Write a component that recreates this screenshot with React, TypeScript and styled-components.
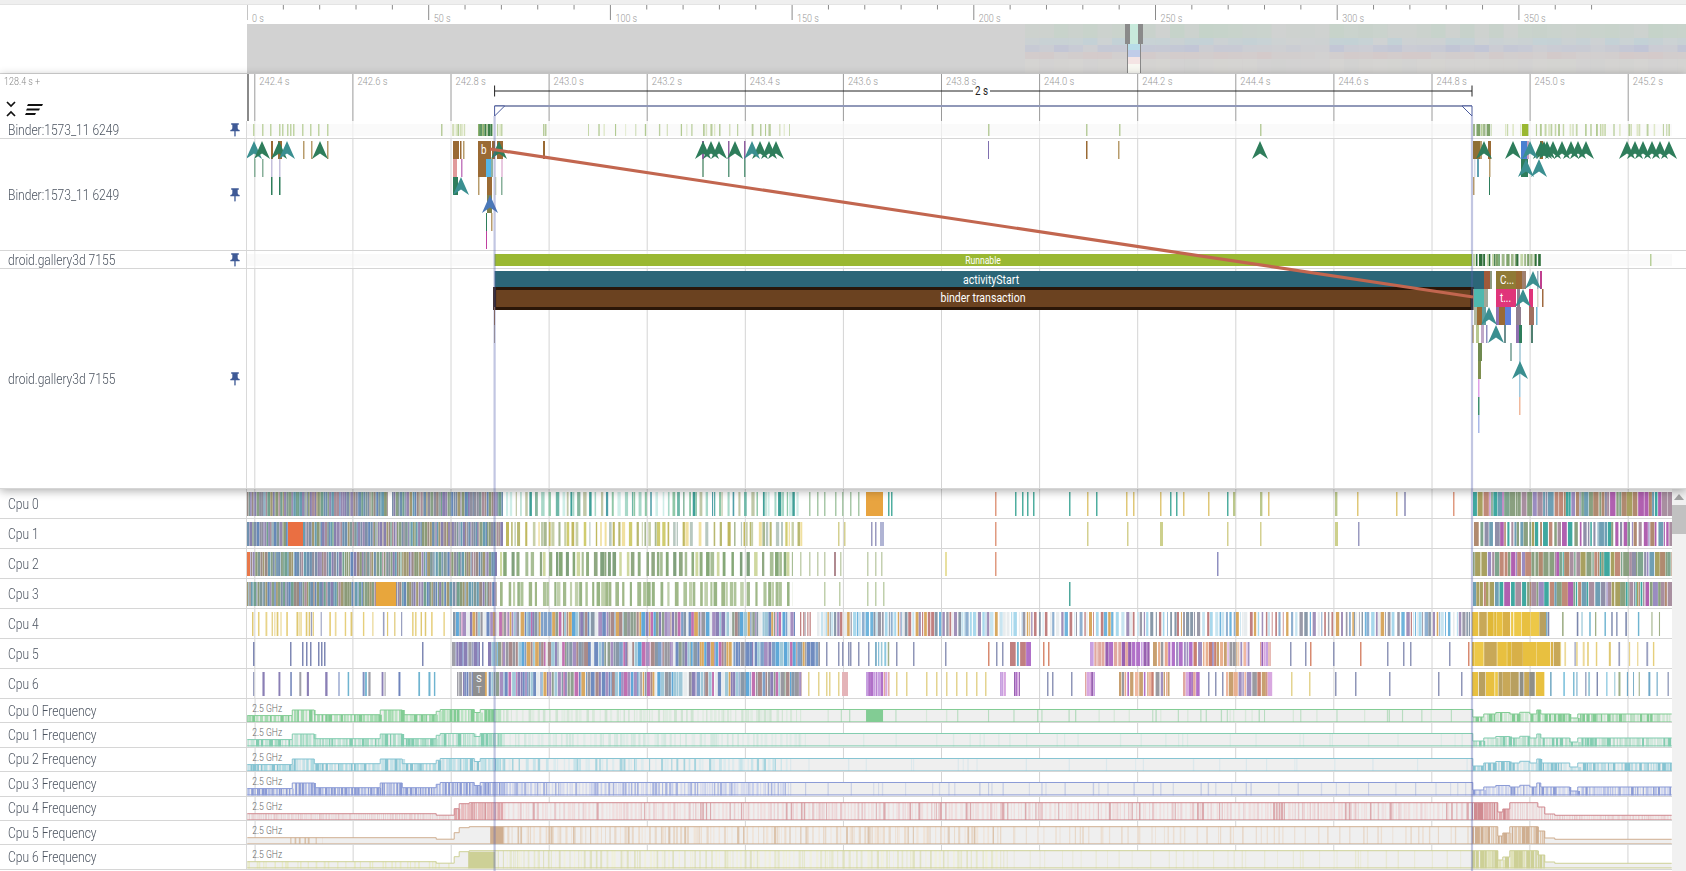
import React from 'react';
import styled, { createGlobalStyle } from 'styled-components';

type Stripe = { x: number; w: number; c: string };
type Slice = [number, number, number, string];
type Mark = [number, number, string];
type Band = [number, number, number, number, number, number, string[]];
type Step = [number, number];

const SIDE = 247;
const FULL_W = 1686 - SIDE;
const SCROLL_W = 1672 - SIDE;
const SEL_A = 494.6;
const SEL_B = 1472;
const GRID = Array.from({ length: 15 }, (_, i) => 254.8 + i * 98.1);
const GRID_TIMES = GRID.map((_, i) => (242.4 + i * 0.2).toFixed(1) + ' s');

const GREEN = '#2e7d5b';
const TEAL = '#3a8f90';
const BLUE = '#4a78b8';

const DENSE = ['#7d8fa8', '#8b9a78', '#6f90ae', '#9488b0', '#72a08e', '#a09872', '#689cb0', '#8880ae', '#88a086', '#8f8f9e', '#9a8a84', '#809898', '#6688b8', '#a88e9a'];
const TEALS = ['#8fc8a8', '#3fa098', '#cfeee8', '#88b8a0', '#c0c8a8', '#6fb8a8', '#a8d8c8', '#4f9fa8'];
const WARM = ['#b8b870', '#d0cc70', '#c8d0a8', '#f0e0a0', '#a8b890', '#c0b860', '#b8c8c0'];
const SAGE = ['#86a878', '#8fa882', '#90ae80', '#a8be96', '#80a07c', '#cfd8a0'];
const SAGE2 = ['#a3bb8e', '#aec49a', '#98b484', '#c0d0ac', '#a0b888'];
const YELLOW = ['#e8d48a', '#ecd999', '#e6cf7c', '#dfc873', '#e8d48a', '#9aa0c0'];
const SKY = ['#6f8bbf', '#8a7fb5', '#5fa8d8', '#a0c8d8', '#a88a8a', '#e8ecee', '#7fa0c8', '#8fa090', '#a58fc0', '#c070b0', '#8898a8', '#9898a0', '#d8a860'];
const SKY_PALE = ['#6fb4dc', '#a8d8ec', '#8fb0d0', '#9a9aa8', '#c08080', '#e8ecee', '#d8a860', '#8898a8', '#c8e4f0', '#a090b8'];
const GOLD = ['#e8c040', '#d8b048', '#b8a060', '#edc848', '#8f8f88', '#e0b838', '#c8a858'];
const RIGHT = ['#a88fa0', '#8aa080', '#6f9fb4', '#b08a70', '#9a8cc0', '#7fa58e', '#c08a78', '#8f8fa8', '#a8a060', '#3fa8a0', '#b060b0'];
const BLUES = ['#6f84bc', '#7f90c0', '#9aa0c0', '#6fb4d0', '#a0a0a8', '#8a7fb5'];
const SKYLINE = ['#6fb4d0', '#8cc8e0', '#7fb0c8', '#6fa8c8', '#9ac8d8', '#7a86ac', '#a0b088'];
const SALMON = ['#e8a890', '#f0b8a0', '#c87f70', '#b070c8', '#c8a070', '#a090c0', '#e8b090', '#d8a8e0', '#9a9aa0'];
const PURPLE = ['#b070c8', '#c8a0e0', '#9860b0', '#d8a8e0', '#e0a8a0'];
const PALE = ['#c4d6a8', '#d2deb8', '#b2ca92', '#dfe8c8', '#bcd0a0'];
const DARKPALE = ['#4f8f4a', '#6fa35a', '#8fb06e', '#3f7f48', '#a8c48a'];

const band = (seed: number, from: number, to: number, wMin: number, wMax: number, gapMax: number, colors: string[]): Stripe[] => {
  let s = seed * 7919 + 13;
  const rnd = () => {
    s = (s * 1664525 + 1013904223) % 4294967296;
    return s / 4294967296;
  };
  const out: Stripe[] = [];
  let x = from;
  while (x < to) {
    const w = wMin + rnd() * (wMax - wMin);
    out.push({ x, w: Math.min(w, to - x), c: colors[Math.floor(rnd() * colors.length)] });
    x += w + rnd() * gapMax;
  }
  return out;
};

const bands = (list: Band[]) => list.flatMap((b) => band(...b));
const singles = (xs: number[], c: string, w = 1.5): Stripe[] => xs.map((x) => ({ x, w, c }));

const cpuRows: { name: string; stripes: Stripe[]; extra?: boolean }[] = [
  {
    name: 'Cpu 0',
    stripes: [
      ...bands([
        [1, 247, 388, 0.8, 3, 0.2, DENSE],
        [2, 392, 503, 0.8, 3, 0.4, DENSE],
        [3, 506, 800, 1, 3.5, 5, TEALS],
        [5, 1473, 1672, 1, 6, 0.9, RIGHT],
      ]),
      { x: 866, w: 17, c: '#e8a440' },
      ...singles([809, 817, 824, 835, 842, 850, 858], '#a8c8a8'),
      ...singles([888, 891, 1015, 1022, 1027, 1033, 1069, 1096, 1170, 1176, 1227], '#4fae9f'),
      ...singles([995, 1453], '#e09a80'),
      ...singles([1087, 1126, 1133, 1160, 1183, 1208, 1268, 1357, 1396], '#e0c878'),
      ...singles([1233, 1260, 1335], '#bcc88c', 2.4),
      ...singles([1404], '#a8a8c8', 2),
    ],
  },
  {
    name: 'Cpu 1',
    stripes: [
      ...bands([
        [6, 247, 288, 0.8, 3, 0.2, DENSE],
        [7, 303, 503, 0.8, 3, 0.4, DENSE],
        [8, 506, 805, 1, 3.5, 6, WARM],
        [10, 1474, 1672, 1, 5, 2.2, RIGHT],
      ]),
      { x: 288, w: 15, c: '#ea6f42' },
      ...singles([838, 844, 1087, 1127, 1227, 1260], '#d4d090'),
      ...singles([871, 875], '#9a9ac0'),
      { x: 880, w: 4, c: '#b0b4d4' },
      ...singles([995], '#e09a80'),
      ...singles([1160, 1335], '#cdd08c', 3),
      ...singles([1358], '#9a9ac0'),
    ],
  },
  {
    name: 'Cpu 2',
    stripes: [
      ...bands([
        [11, 247, 497, 0.8, 3, 0.6, DENSE],
        [12, 500, 793, 2, 4, 6, SAGE],
      ]),
      ...bands([[13, 1473, 1672, 1, 6, 1, RIGHT]]),
      { x: 247, w: 3, c: '#e8784a' },
      ...singles([800, 809, 817, 824, 840, 867, 875, 881], '#c4d0b0'),
      ...singles([834], '#b08a90', 2),
      ...singles([945], '#e8e0a0', 2),
      ...singles([995], '#e09a80'),
      ...singles([1217], '#8f8fc0'),
    ],
  },
  {
    name: 'Cpu 3',
    stripes: [
      ...bands([
        [14, 247, 376, 0.8, 3, 0.4, DENSE],
        [15, 396, 497, 0.8, 3, 0.7, DENSE],
        [16, 500, 793, 2, 4, 6, SAGE2],
        [17, 1473, 1672, 1, 6, 1, RIGHT],
      ]),
      { x: 376, w: 20, c: '#e8a63c' },
      ...singles([824, 839, 867, 875, 883], '#c0d0ac'),
      ...singles([1069], '#4fa89c'),
    ],
  },
  {
    name: 'Cpu 4',
    stripes: bands([
      [18, 252, 445, 1, 2, 11, YELLOW],
      [19, 453, 795, 0.8, 4, 0.7, SKY],
      [63, 800, 812, 1, 1.5, 3, ['#c08080', '#9a9aa8']],
      [64, 817, 1000, 0.8, 3.5, 1.5, SKY_PALE],
      [65, 1000, 1472, 0.8, 3.5, 2.8, SKY_PALE],
      [20, 1472, 1546, 2, 9, 1, GOLD],
      [21, 1546, 1672, 1, 1.6, 14, SKYLINE],
    ]),
  },
  {
    name: 'Cpu 5',
    stripes: [
      ...singles([253, 290, 302, 306, 310, 318, 321, 324, 422, 482], '#7f88b4'),
      ...bands([
        [22, 452, 480, 0.8, 4, 0.5, BLUES],
        [66, 488, 820, 0.8, 4, 0.6, SKY],
        [67, 875, 890, 1, 2, 3, SKYLINE],
        [68, 1010, 1031, 1, 6, 2, ['#9a9ab8', '#b070c8', '#c08080', '#6fb4d0']],
        [24, 1090, 1150, 0.8, 4, 1, PURPLE],
        [25, 1153, 1250, 0.8, 4, 1.4, SALMON],
        [69, 1260, 1271, 1, 3, 0.5, PURPLE],
        [26, 1472, 1560, 2, 14, 1, GOLD],
        [27, 1560, 1655, 1, 2, 13, YELLOW],
      ]),
      ...singles([826, 838, 842, 848, 850, 858, 868, 896, 913, 945, 996, 1002, 1290, 1305, 1333, 1387, 1403, 1410, 1449], '#8f96b8'),
      ...singles([988, 1043, 1048, 1310, 1360, 1468], '#d88a70'),
    ],
  },
  {
    name: 'Cpu 6',
    extra: true,
    stripes: [
      ...bands([
        [28, 253, 445, 1, 2.4, 18, BLUES],
        [29, 457, 473, 1, 3, 1, BLUES],
        [30, 485, 802, 0.8, 4, 0.8, SKY],
        [31, 866, 890, 1, 4, 0.8, PURPLE],
        [70, 1000, 1006, 1, 3, 0.5, PURPLE],
        [71, 1014, 1020, 1, 3, 0.5, PURPLE],
        [72, 1085, 1095, 1, 3, 0.5, PURPLE],
        [32, 1119, 1170, 1, 4, 2, SALMON],
        [33, 1183, 1200, 1, 4, 0.5, PURPLE],
        [73, 1226, 1273, 1, 5, 1, SALMON],
        [34, 1472, 1545, 2, 9, 1, GOLD],
        [35, 1550, 1672, 1, 2, 13, SKYLINE],
      ]),
      ...singles([808, 818, 826, 829, 838, 896, 906, 926, 936, 946, 956, 966, 976, 985, 1291, 1309], '#e4d490'),
      { x: 842, w: 6, c: '#e4b4b8' },
      ...singles([1047, 1052, 1071, 1208, 1215, 1222, 1335, 1355, 1389, 1438, 1461], '#8f96b8'),
    ],
  },
];

const littleSteps: Step[] = [[247, 16.6], [292, 11], [314, 15.7], [380, 11], [402, 15.7], [436, 12.3], [440, 10.5], [474, 13.5], [480, 10.5], [1473, 18], [1484, 15], [1496, 13.5], [1510, 15], [1520, 13.3], [1530, 15], [1537, 11], [1541, 15], [1570, 19], [1578, 15]];
const bigSteps: Step[] = [[247, 16.7], [436, 18.2], [454, 11.7], [459, 6.7], [469, 5.7], [1498, 15], [1503, 12], [1510, 5.7], [1538, 10], [1545, 17], [1555, 18.3]];

const freqRows: { name: string; color: string; steps: Step[]; marks: Band[]; block?: [number, number] }[] = [
  { name: 'Cpu 0 Frequency', color: '#82cc94', steps: littleSteps, block: [866, 883], marks: [[41, 247, 503, 1, 4, 2, ['#82cc94', '#a6dcb2', '#bce4c4']], [42, 503, 800, 1, 3, 5, ['#d8e8da', '#cfe4d2', '#e0ece2']], [74, 800, 1472, 1, 1.4, 30, ['#d8e8da', '#b8dcc0']], [43, 1473, 1672, 1, 4, 2, ['#82cc94', '#b8ddc0', '#cfe8d4']]] },
  { name: 'Cpu 1 Frequency', color: '#82cdb0', steps: littleSteps, marks: [[44, 247, 503, 1, 4, 2, ['#82cdb0', '#a8dcc6', '#c0e4d6']], [45, 503, 800, 1, 3, 5, ['#d4e8e0', '#e0ece8']], [75, 800, 1472, 1, 1.4, 44, ['#dcebe6']], [46, 1473, 1672, 1, 4, 2, ['#82cdb0', '#b8dfcc', '#d0e8dc']]] },
  { name: 'Cpu 2 Frequency', color: '#86c4d2', steps: littleSteps, marks: [[47, 247, 503, 1, 4, 2, ['#86c4d2', '#aedbe2', '#c4e2e8']], [48, 503, 790, 1, 3, 6, ['#a6d4de', '#c8e4ea', '#dcebee']], [76, 790, 1472, 1, 1.4, 60, ['#dce8ec']], [49, 1473, 1672, 1, 4, 2, ['#86c4d2', '#b8dce4', '#d4e8ec']]] },
  { name: 'Cpu 3 Frequency', color: '#8b9bd6', steps: littleSteps, marks: [[50, 247, 503, 1, 3, 1.6, ['#8b9bd6', '#b2bee6']], [51, 503, 790, 1, 2.4, 2.4, ['#c8d0ec', '#d8dcee', '#a8b4e0']], [77, 790, 1472, 1, 1.4, 28, ['#d4dae8', '#c4cce4']], [52, 1473, 1672, 1, 3, 2, ['#8b9bd6', '#b8c2e8', '#d2d8f0']]] },
  { name: 'Cpu 4 Frequency', color: '#d08a90', steps: bigSteps, marks: [[53, 247, 450, 0.6, 1, 1.5, ['#ecd4d6', '#e6c8ca']], [78, 454, 503, 1, 4, 1, ['#d8979c', '#e0a8ac', '#e8bcbe']], [54, 503, 1472, 0.7, 2.4, 3.4, ['#ecd4d6', '#e8c8ca', '#f0dede', '#f0dede', '#f0dede', '#dcaaae']], [55, 1472, 1510, 1, 6, 1, ['#d08a90', '#e0a8ac']], [56, 1510, 1672, 0.6, 1, 1.6, ['#e8c8ca', '#f0d8d8']]] },
  { name: 'Cpu 5 Frequency', color: '#cfae90', steps: bigSteps, block: [490, 503], marks: [[57, 290, 322, 1, 2, 8, ['#d8c0a8']], [58, 503, 1000, 0.7, 2.4, 5, ['#ecdccc', '#e8d8c8', '#f0e4d8', '#dcc4ac']], [79, 1000, 1472, 0.7, 1.6, 13, ['#ecdfd2', '#e8d8c8']], [59, 1472, 1545, 1, 5, 1.2, ['#cfae90', '#e0c8b0']]] },
  { name: 'Cpu 6 Frequency', color: '#cdd096', steps: bigSteps, block: [468, 495], marks: [[60, 247, 450, 1, 2, 10, ['#e8eac8']], [61, 495, 1000, 0.7, 2.4, 5, ['#e6e8cc', '#e0e2c0', '#f0f0dc']], [80, 1000, 1472, 0.7, 1.4, 18, ['#e8e8d4']], [62, 1472, 1545, 1, 6, 1.4, ['#cdd096', '#e0e2b8']]] },
];

const BROWN = '#9a6a34';
const TAN = '#b89c6c';
const binderSummary = [
  ...singles([253, 262, 270, 279, 282, 287, 290, 293, 302, 310, 318, 327], '#c0d4a4'),
  ...bands([
    [70, 452, 466, 0.8, 2, 1.4, PALE],
    [71, 478, 493, 0.8, 2.4, 0.5, DARKPALE],
    [72, 497, 503, 0.8, 1.4, 1.2, PALE],
    [73, 588, 793, 0.8, 1.4, 14, PALE],
    [74, 1473, 1492, 1, 4, 1.6, ['#7fa36a', '#9fb88a', '#b8cf9a']],
    [75, 1505, 1670, 1, 2, 8, PALE],
  ]),
  ...singles([441, 543, 545, 703, 711, 719, 752, 760, 769, 988, 1086, 1119, 1260], '#b8cc9c'),
  { x: 1522, w: 6, c: '#9ab832' },
];
const droidSummary: Stripe[] = [
  ...bands([[76, 1473, 1542, 1, 3.5, 2.4, ['#4f8f4a', '#7fa36a', '#9fb88a', '#2f6f3a', '#c4d6a8']]]),
  { x: 1650, w: 1.5, c: '#b8cf9a' },
];

const binderSlices: Slice[] = [
  [0, 271, 2, BROWN], [0, 278, 4, BROWN], [0, 303, 1.5, TAN], [0, 311, 1.5, TAN], [0, 327, 1.5, TAN],
  [1, 254, 1.5, '#88b09a'], [1, 262, 1.5, '#88b09a'], [1, 271, 1.5, '#c4c0dc'], [1, 279, 1.5, '#c4c0dc'],
  [2, 271, 1.5, GREEN], [2, 279, 1.5, GREEN],
  [0, 453, 6, BROWN], [0, 460, 1.5, BROWN], [0, 463, 1.5, TAN],
  [1, 453, 4, '#e09a9a'], [1, 461, 1.5, '#c47cc0'],
  [2, 453, 5, GREEN], [0, 478, 13, BROWN], [0, 492, 3, BROWN], [0, 497, 6, BROWN],
  [1, 478, 8, BROWN], [1, 486, 5, '#55b5e5'], [1, 491, 2, '#8fb0a0'], [1, 501, 2, '#e8c8e0'],
  [2, 478, 1.5, TAN], [2, 487, 5, BROWN], [2, 495, 1.5, '#d8e0c8'], [2, 501, 1.5, '#88b09a'],
  [3, 487, 5, '#7f7f4a'], [4, 486, 1, GREEN], [4, 491, 1.5, TAN], [5, 486, 1, '#c040a0'],
  [0, 543, 2, BROWN], [0, 702, 2, '#9060a0'], [0, 728, 1.5, '#9060a0'], [0, 744, 1.5, '#9060a0'],
  [0, 988, 1, '#8070b0'], [0, 1086, 1.5, BROWN], [0, 1118, 1.5, TAN],
  [0, 1473, 7, '#8f6f34'], [0, 1480, 2, TAN], [0, 1488, 3, BROWN], [0, 1521, 6, '#4a80d0'], [0, 1527, 2, '#c8a0c0'], [0, 1540, 3, BROWN],
  [1, 1474, 1.5, '#d8dce8'], [1, 1477, 2, '#5fa0b0'], [1, 1489, 1.5, TAN], [1, 1521, 7, GREEN],
  [2, 1473, 1.5, TAN], [2, 1489, 1, GREEN],
  [1, 702, 2, '#88b09a'], [1, 728, 1.5, '#5f9a80'], [1, 744, 1.5, '#5f9a80'],
];
const binderMarks: Mark[] = [
  [0, 254, TEAL], [0, 262, GREEN], [0, 279, GREEN], [0, 287, TEAL], [0, 320, GREEN], [0, 499, GREEN],
  [2, 461, TEAL], [3, 490, BLUE], [1, 1526, TEAL], [1, 1539, TEAL],
  ...[703, 711, 719, 735, 760, 769, 776, 1260, 1484, 1513, 1541, 1544, 1547, 1553, 1562, 1571, 1578, 1586, 1627, 1635, 1643, 1652, 1660, 1669].map((x): Mark => [0, x, GREEN]),
  [0, 752, TEAL], [0, 1530, TEAL],
];

const droidSlices: Slice[] = [
  [0, 1484, 6, '#a05a3a'], [0, 1490, 2, '#8f9a80'], [0, 1496, 20, '#8f7a35'], [0, 1516, 6, BROWN], [0, 1522, 4, '#a08070'], [0, 1540, 2, '#c0408f'], [0, 1537, 1.5, '#a0b0c0'],
  [1, 1474, 10, '#4fb8ae'], [1, 1484, 4, '#a0a898'], [1, 1496, 20, '#e0357a'], [1, 1517, 3, '#8f7f90'], [1, 1529, 4, '#e0357a'], [1, 1537, 1.5, '#d8d8c8'], [1, 1542, 1.5, '#a06a40'],
  [2, 1474, 3, '#b0b8a0'], [2, 1477, 5, BROWN], [2, 1482, 4, '#5f9f9f'], [2, 1496, 3, '#8f6fb0'], [2, 1499, 6, BROWN], [2, 1505, 6, '#5f7fd8'], [2, 1516, 5, '#8f7f90'], [2, 1529, 5, '#a07060'], [2, 1536, 1.5, '#6fb4d0'],
  [3, 1472, 2, '#c4b890'], [3, 1476, 3, '#b8c890'], [3, 1481, 3, '#c0a8c8'], [3, 1486, 1.5, '#8f8fc0'], [3, 1504, 2, '#6f8f8f'], [3, 1516, 3, '#8f6fb0'], [3, 1519, 3, GREEN], [3, 1531, 2, '#4f7f70'],
  [4, 1478, 4, '#6f8a50'], [4, 1510, 2, '#94b4ac'], [4, 1519, 2, '#b8d4e0'],
  [5, 1478, 3, '#7f8f50'], [5, 1519, 1.5, '#a0c8dc'],
  [6, 1478, 1.5, '#e0a0e8'], [6, 1519, 1.5, '#a0c8dc'],
  [7, 1478, 1.5, '#3f8f70'], [7, 1519, 1.5, '#f0b89c'],
  [8, 1478, 1.5, '#a8b8e8'],
  [2, 494, 1, BROWN], [3, 494, 1, '#b8a890'],
];
const droidMarks: Mark[] = [
  [0, 1533, TEAL], [1, 1523, TEAL], [2, 1489, TEAL], [3, 1496, TEAL], [5, 1520, TEAL],
];

const overviewCells = (() => {
  const rows: [number, number, string, number][] = [
    [24, 14, '#9fd8b0', 0.16],
    [38, 7, '#9fd0e0', 0.2],
    [45, 7, '#9aa8e0', 0.2],
    [52, 7, '#e0a0a0', 0.11],
    [59, 14, '#f0e8d0', 0.08],
  ];
  const cells: { x: number; y: number; h: number; c: string; a: number }[] = [];
  let s = 77;
  for (let x = 1025; x < 1686; x += 14.5) {
    for (const [y, h, c, a] of rows) {
      s = (s * 1664525 + 1013904223) % 4294967296;
      const hole = x > 1260 && x < 1320 ? 0.4 : 1;
      cells.push({ x, y, h, c, a: a * hole * (0.3 + (s / 4294967296) * 1.2) });
    }
  }
  return cells;
})();

const GlobalStyle = createGlobalStyle`
  html, body {
    margin: 0;
    overflow: hidden;
    background: #fff;
    font-family: Roboto, "Liberation Sans", sans-serif;
  }
`;

const Page = styled.div`
  position: relative;
  display: flex;
  flex-direction: column;
  width: 1686px;
  height: 871px;
  overflow: hidden;
`;

const TopStrip = styled.div`
  height: 4px;
  background: #efefef;
  border-bottom: 1px solid #e4e4e4;
`;

const OverviewRow = styled.div`
  display: flex;
  height: 68px;
  border-bottom: 1px solid #d8d8d8;
`;

const Spacer = styled.div`
  width: ${SIDE}px;
  flex: none;
`;

const Canvas = styled.svg`
  display: block;
  flex: none;
  overflow: hidden;
`;

const Soft = styled.g`
  filter: blur(0.45px);
`;

const Pinned = styled.div`
  position: relative;
  z-index: 2;
  background: #fff;
  box-shadow: 0 2px 9px rgba(0, 0, 0, 0.32);
`;

const HeaderRow = styled.div`
  display: flex;
  height: 47px;
`;

const HeaderSide = styled.div`
  display: flex;
  flex-direction: column;
  justify-content: space-between;
  width: ${SIDE}px;
  flex: none;
  box-sizing: border-box;
  padding: 2px 0 4px 4px;
`;

const Offset = styled.span`
  font-size: 10px;
  font-weight: 300;
  color: #8a8a8a;
  transform: scaleX(0.9);
  transform-origin: left;
`;

const Tools = styled.div`
  display: flex;
  align-items: center;
  gap: 9px;
  padding-left: 2px;
`;

const Track = styled.div<{ $h: number }>`
  display: flex;
  height: ${(p) => p.$h}px;
  box-sizing: border-box;
  border-bottom: 1px solid #d6d6d6;
`;

const Label = styled.div`
  display: flex;
  align-items: center;
  justify-content: space-between;
  width: ${SIDE}px;
  flex: none;
  box-sizing: border-box;
  padding: 0 3px 0 8px;
  border-right: 1px solid #d9d9d9;
`;

const LabelText = styled.span`
  font-size: 14px;
  font-weight: 300;
  color: #4c5460;
  white-space: nowrap;
  transform: scaleX(0.86);
  transform-origin: left;
`;

const PinIcon = styled.svg`
  width: 16px;
  height: 16px;
  fill: #3f5a96;
  flex: none;
`;

const Scroller = styled.div`
  display: flex;
  flex: 1;
  min-height: 0;
`;

const CpuList = styled.div`
  width: ${SIDE + SCROLL_W}px;
  flex: none;
`;

const Scrollbar = styled.div`
  display: flex;
  flex-direction: column;
  align-items: center;
  flex: 1;
  background: #f1f1f1;
`;

const ArrowBox = styled.div`
  display: flex;
  align-items: center;
  justify-content: center;
  height: 15px;
  flex: none;
`;

const Thumb = styled.div`
  width: 100%;
  height: 29px;
  margin-top: 1px;
  background: #c1c1c1;
`;

const Overlay = styled.svg`
  position: absolute;
  inset: 0;
  z-index: 5;
  pointer-events: none;
`;

const ChartText = styled.text<{ $size?: number; $fill?: string; $weight?: number }>`
  font-family: Roboto, "Liberation Sans", sans-serif;
  font-size: ${(p) => p.$size ?? 11}px;
  font-weight: ${(p) => p.$weight ?? 400};
  fill: ${(p) => p.$fill ?? '#fff'};
`;

// perfetto draws all its labels in a condensed face, so squeeze Roboto sideways
const Squeezed = (p: { x: number; y: number; k?: number; anchor?: 'middle' | 'start'; size?: number; fill?: string; weight?: number; children: React.ReactNode }) => (
  <ChartText transform={`translate(${p.x} ${p.y}) scale(${p.k ?? 0.82} 1)`} textAnchor={p.anchor ?? 'start'} $size={p.size} $fill={p.fill} $weight={p.weight}>
    {p.children}
  </ChartText>
);

const Pin = () => (
  <PinIcon viewBox="0 0 24 24">
    <path d="M16 9V4h1c.55 0 1-.45 1-1s-.45-1-1-1H7c-.55 0-1 .45-1 1s.45 1 1 1h1v5c0 1.66-1.34 3-3 3v2h5.97v7l1 1 1-1v-7H19v-2c-1.66 0-3-1.34-3-3z" />
  </PinIcon>
);

const Grid = ({ h, color = '#d4d4d4' }: { h: number; color?: string }) => (
  <>
    {GRID.map((x) => (
      <line key={x} x1={x} x2={x} y1={0} y2={h} stroke={color} strokeWidth={1} />
    ))}
  </>
);

const Stripes = ({ items, y, h }: { items: Stripe[]; y: number; h: number }) => (
  <Soft>
    {items.map((s, i) => (
      <rect key={i} x={s.x} y={y} width={s.w} height={h} fill={s.c} />
    ))}
  </Soft>
);

const Plane = ({ w, h, children }: { w: number; h: number; children: React.ReactNode }) => (
  <Canvas width={w} height={h} viewBox={`${SIDE} 0 ${w} ${h}`}>
    {children}
  </Canvas>
);

const Chevron = ({ cx, y, color }: { cx: number; y: number; color: string }) => (
  <path d={`M${cx} ${y} L${cx + 8} ${y + 18} L${cx} ${y + 12.5} L${cx - 8} ${y + 18} Z`} fill={color} />
);

const Slices = ({ slices, marks, top }: { slices: Slice[]; marks: Mark[]; top: number }) => (
  <>
    {slices.map(([lvl, x, w, c], i) => (
      <rect key={i} x={x} y={top + lvl * 18} width={w} height={18} fill={c} />
    ))}
    {marks.map(([lvl, x, c], i) => (
      <Chevron key={i} cx={x} y={top + lvl * 18} color={c} />
    ))}
  </>
);

const levelAt = (steps: Step[], x: number) => {
  let v = steps[0][1];
  for (const [sx, sy] of steps) {
    if (sx <= x) v = sy;
    else break;
  }
  return v;
};

const FreqChart = ({ row, h }: { row: (typeof freqRows)[number]; h: number }) => {
  let path = `M247 ${row.steps[0][1]}`;
  row.steps.forEach(([x, y], i) => {
    if (i > 0) path += ` L${x} ${row.steps[i - 1][1]} L${x} ${y}`;
  });
  path += ` L1672 ${row.steps[row.steps.length - 1][1]}`;
  const marks = bands(row.marks);
  return (
    <>
      <path d={`${path} L1672 ${h} L247 ${h} Z`} fill="#efefef" />
      <Soft>
        {marks.map((m, i) => {
          const top = levelAt(row.steps, m.x);
          return <rect key={i} x={m.x} y={top} width={m.w} height={h - top} fill={m.c} />;
        })}
      </Soft>
      {row.block && <rect x={row.block[0]} y={levelAt(row.steps, row.block[0])} width={row.block[1] - row.block[0]} height={h - levelAt(row.steps, row.block[0])} fill={row.color} />}
      <path d={path} fill="none" stroke={row.color} strokeWidth={1} />
      <line x1={247} x2={1672} y1={h - 0.5} y2={h - 0.5} stroke={row.color} strokeWidth={1} />
      <Squeezed x={252} y={13.5} size={10.5} fill="#666" weight={300}>2.5 GHz</Squeezed>
    </>
  );
};

export default function App() {
  return (
    <Page>
      <GlobalStyle />
      <TopStrip />
      <OverviewRow>
        <Spacer />
        <Plane w={FULL_W} h={68}>
          {Array.from({ length: 38 }, (_, i) => {
            const x = SIDE + i * 36.34;
            const major = i % 5 === 0;
            return <line key={i} x1={x} x2={x} y1={0} y2={major ? 15 : 4.5} stroke="#8a8a8a" strokeWidth={1} />;
          })}
          {Array.from({ length: 8 }, (_, i) => (
            <Squeezed key={i} x={SIDE + i * 181.7 + 5} y={17} size={11} fill="#9a9a9a" weight={300}>{`${i * 50} s`}</Squeezed>
          ))}
          <rect x={SIDE} y={19} width={FULL_W} height={49} fill="#d2d2d2" />
          {overviewCells.map((c, i) => (
            <rect key={i} x={c.x} y={c.y - 5} width={14.5} height={c.h} fill={c.c} opacity={c.a} />
          ))}
          <rect x={1128} y={19} width={12} height={49} fill="#f8f8f2" />
          <rect x={1130} y={19} width={9} height={20} fill="#c8eadc" />
          <rect x={1128} y={39} width={12} height={6} fill="#b8dce8" />
          <rect x={1128} y={45} width={12} height={7} fill="#c0cce8" />
          <rect x={1128} y={52} width={12} height={7} fill="#f4e4e4" />
          <line x1={1127.5} x2={1127.5} y1={39} y2={68} stroke="#888" />
          <line x1={1140.5} x2={1140.5} y1={39} y2={68} stroke="#888" />
          <rect x={1125} y={19} width={5} height={20} fill="#8a8a8a" />
          <rect x={1138} y={19} width={5} height={20} fill="#8a8a8a" />
        </Plane>
      </OverviewRow>
      <Pinned>
        <HeaderRow>
          <HeaderSide>
            <Offset>128.4 s +</Offset>
            <Tools>
              <svg width="10" height="16" viewBox="0 0 10 16" fill="none" stroke="#111" strokeWidth="1.7">
                <path d="M1 1 L5 5 L9 1" />
                <path d="M1 15 L5 11 L9 15" />
              </svg>
              <svg width="18" height="11" viewBox="0 0 18 11" fill="#111">
                <path d="M3 0 H18 L17 2 H2 Z" />
                <path d="M2 4.5 H15 L14 6.5 H1 Z" />
                <path d="M1 9 H11 L10 11 H0 Z" />
              </svg>
            </Tools>
          </HeaderSide>
          <Plane w={FULL_W} h={47}>
            <rect x={247} y={0} width={2} height={47} fill="#8a8a8a" />
            <Grid h={47} color="#9a9a9a" />
            {GRID.map((x, i) => (
              <Squeezed key={x} x={x + 4.5} y={10.5} size={11.5} fill="#9a9a9a" weight={300}>
                {GRID_TIMES[i]}
              </Squeezed>
            ))}
          </Plane>
        </HeaderRow>
        <Track $h={18}>
          <Label>
            <LabelText>Binder:1573_11 6249</LabelText>
            <Pin />
          </Label>
          <Plane w={FULL_W - 1} h={17}>
            <rect x={247} y={3} width={1425} height={12} fill="#fafafa" />
            <Grid h={17} color="#ececec" />
            <Stripes items={binderSummary} y={3} h={12} />
          </Plane>
        </Track>
        <Track $h={112}>
          <Label>
            <LabelText>Binder:1573_11 6249</LabelText>
            <Pin />
          </Label>
          <Plane w={FULL_W - 1} h={111}>
            <Grid h={111} />
            <Slices slices={binderSlices} marks={binderMarks} top={2} />
            <Squeezed x={481} y={15} size={12}>b</Squeezed>
          </Plane>
        </Track>
        <Track $h={18}>
          <Label>
            <LabelText>droid.gallery3d 7155</LabelText>
            <Pin />
          </Label>
          <Plane w={FULL_W - 1} h={17}>
            <rect x={247} y={3} width={1425} height={12} fill="#fafafa" />
            <Grid h={17} color="#ececec" />
            <rect x={SEL_A} y={3} width={SEL_B - SEL_A} height={12} fill="#9ab832" />
            <Stripes items={droidSummary} y={3} h={12} />
            <Squeezed x={983} y={12.5} size={10} anchor="middle" k={0.86}>Runnable</Squeezed>
          </Plane>
        </Track>
        <Track $h={220}>
          <Label>
            <LabelText>droid.gallery3d 7155</LabelText>
            <Pin />
          </Label>
          <Plane w={FULL_W - 1} h={219}>
            <Grid h={219} />
            <rect x={SEL_A} y={2} width={1489 - SEL_A} height={18} fill="#2c6678" />
            <rect x={SEL_A} y={19.5} width={SEL_B - SEL_A} height={20} fill="#6b4220" stroke="#2a1608" strokeWidth={3} />
            <Slices slices={droidSlices} marks={droidMarks} top={2} />
            <Squeezed x={991} y={15} size={12} anchor="middle" k={0.88}>activityStart</Squeezed>
            <Squeezed x={983} y={33} size={12} anchor="middle" k={0.88}>binder transaction</Squeezed>
            <Squeezed x={1500} y={15} size={12}>C...</Squeezed>
            <Squeezed x={1500} y={33} size={12}>t...</Squeezed>
          </Plane>
        </Track>
      </Pinned>
      <Scroller>
        <CpuList>
          {cpuRows.map((row) => (
            <Track key={row.name} $h={30}>
              <Label>
                <LabelText>{row.name}</LabelText>
              </Label>
              <Plane w={SCROLL_W} h={29}>
                <Grid h={29} />
                <Stripes items={row.stripes} y={3} h={24} />
                {row.extra && (
                  <>
                    <rect x={473} y={3} width={12} height={24} fill="#8f8f8f" />
                    <Squeezed x={479} y={13} size={9} anchor="middle" k={1}>S</Squeezed>
                    <Squeezed x={479} y={24} size={9} anchor="middle" k={1} fill="#ddd">T</Squeezed>
                  </>
                )}
              </Plane>
            </Track>
          ))}
          {freqRows.map((row) => (
            <Track key={row.name} $h={24.4}>
              <Label>
                <LabelText>{row.name}</LabelText>
              </Label>
              <Plane w={SCROLL_W} h={23.4}>
                <Grid h={23.4} />
                <FreqChart row={row} h={23.4} />
              </Plane>
            </Track>
          ))}
        </CpuList>
        <Scrollbar>
          <ArrowBox>
            <svg width="10" height="6" viewBox="0 0 10 6" fill="#a3a3a3">
              <path d="M5 0 L10 6 H0 Z" />
            </svg>
          </ArrowBox>
          <Thumb />
        </Scrollbar>
      </Scroller>
      <Overlay width={1686} height={871} viewBox="0 0 1686 871">
        <line x1={SEL_A} x2={SEL_A} y1={116} y2={871} stroke="#5560b0" strokeOpacity={0.36} strokeWidth={2.2} />
        <line x1={SEL_B} x2={SEL_B} y1={116} y2={871} stroke="#5560b0" strokeOpacity={0.36} strokeWidth={2.2} />
        <line x1={SEL_A} x2={SEL_B} y1={91} y2={91} stroke="#222" strokeWidth={1} />
        <line x1={SEL_A} x2={SEL_A} y1={85.5} y2={96.5} stroke="#222" strokeWidth={1} />
        <line x1={SEL_B} x2={SEL_B} y1={85.5} y2={96.5} stroke="#222" strokeWidth={1} />
        <rect x={973} y={85} width={17} height={12} fill="#fff" />
        <Squeezed x={981.5} y={95} size={12} anchor="middle" fill="#222">2 s</Squeezed>
        <line x1={SEL_A} x2={SEL_B} y1={106} y2={106} stroke="#9098b8" strokeWidth={2} />
        <path d={`M${SEL_A} 106 H${SEL_A + 10} L${SEL_A} 116 Z`} fill="#fff" stroke="#4a5a9c" strokeWidth={1} />
        <path d={`M${SEL_B} 106 H${SEL_B - 10} L${SEL_B} 116 Z`} fill="#fff" stroke="#4a5a9c" strokeWidth={1} />
        <line x1={490} x2={1473} y1={149} y2={297} stroke="#c2664f" strokeWidth={3.2} />
      </Overlay>
    </Page>
  );
}
